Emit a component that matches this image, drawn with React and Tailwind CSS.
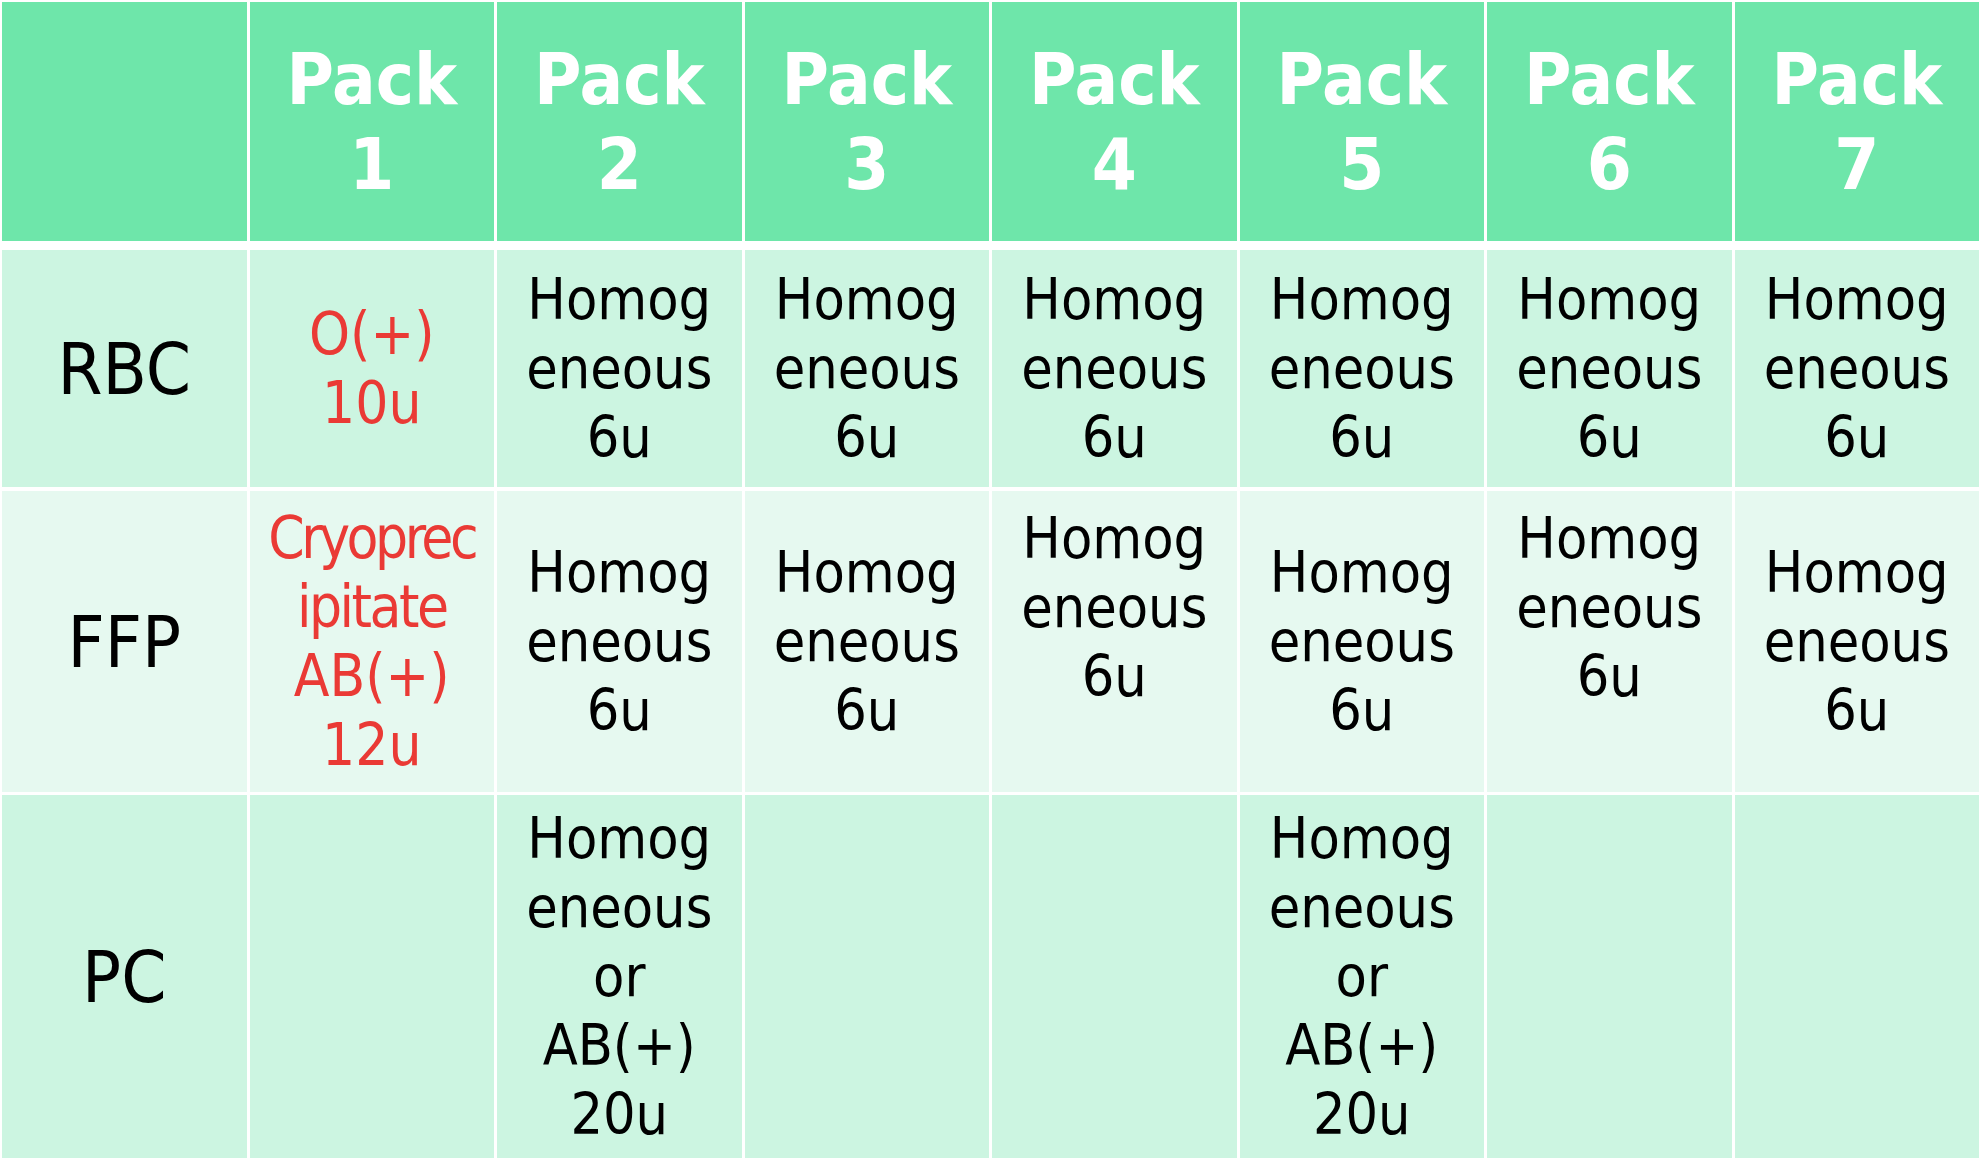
const packs = [1, 2, 3, 4, 5, 6, 7];

const homog = ["Homog", "eneous", "6u"];
const homogTop = ["Homog", "eneous", "6u", "\u00a0"];
const homogPc = ["Homog", "eneous", "or", "AB(+)", "20u"];

const rows = [
  {
    label: "RBC",
    height: "h-[237px] mt-[9px]",
    bg: "bg-[#ccf5e1]",
    cells: [
      { lines: ["O(+)", "10u"], red: true },
      { lines: homog },
      { lines: homog },
      { lines: homog },
      { lines: homog },
      { lines: homog },
      { lines: homog },
    ],
  },
  {
    label: "FFP",
    height: "h-[301px] mt-[4px]",
    bg: "bg-[#e6f9f0]",
    cells: [
      { lines: ["Cryoprec", "ipitate", "AB(+)", "12u"], red: true, cryo: true },
      { lines: homog },
      { lines: homog },
      { lines: homogTop },
      { lines: homog },
      { lines: homogTop },
      { lines: homog },
    ],
  },
  {
    label: "PC",
    height: "h-[363px] mt-[3px]",
    bg: "bg-[#ccf5e1]",
    cells: [
      { lines: [] },
      { lines: homogPc },
      { lines: [] },
      { lines: [] },
      { lines: homogPc },
      { lines: [] },
      { lines: [] },
    ],
  },
];

function Cell({ cell, bg }) {
  const tone = cell.red ? "text-[#ea3a35] text-[58px]" : "text-black text-[57px]";
  return (
    <div className={`${bg} flex flex-col items-center justify-center leading-[69px] ${tone}`}>
      {cell.lines.map((line, i) => {
        let track = "";
        if (cell.cryo && i === 0) track = "tracking-[-3.5px]";
        if (cell.cryo && i === 1) track = "tracking-[-2.5px]";
        return (
          <div key={i} className={track}>
            {line}
          </div>
        );
      })}
    </div>
  );
}

export default function App() {
  return (
    <div
      className="w-[1984px] h-[1162px] bg-white pt-[2px] pl-[2px] pr-[5px] overflow-hidden"
      style={{ fontFamily: '"DejaVu Sans Condensed", "DejaVu Sans", Tahoma, sans-serif' }}
    >
      <div className="grid grid-cols-8 gap-x-[3px] h-[239px]">
        <div className="bg-[#6ee6aa]" />
        {packs.map((n) => (
          <div
            key={n}
            className="bg-[#6ee6aa] flex flex-col items-center justify-center text-white font-bold text-[72px] leading-[85px]"
          >
            <div>Pack</div>
            <div>{n}</div>
          </div>
        ))}
      </div>

      {rows.map((row) => (
        <div key={row.label} className={`grid grid-cols-8 gap-x-[3px] ${row.height}`}>
          <div className={`${row.bg} flex items-center justify-center text-black text-[72px]`}>
            {row.label}
          </div>
          {row.cells.map((cell, i) => (
            <Cell key={i} cell={cell} bg={row.bg} />
          ))}
        </div>
      ))}
    </div>
  );
}
